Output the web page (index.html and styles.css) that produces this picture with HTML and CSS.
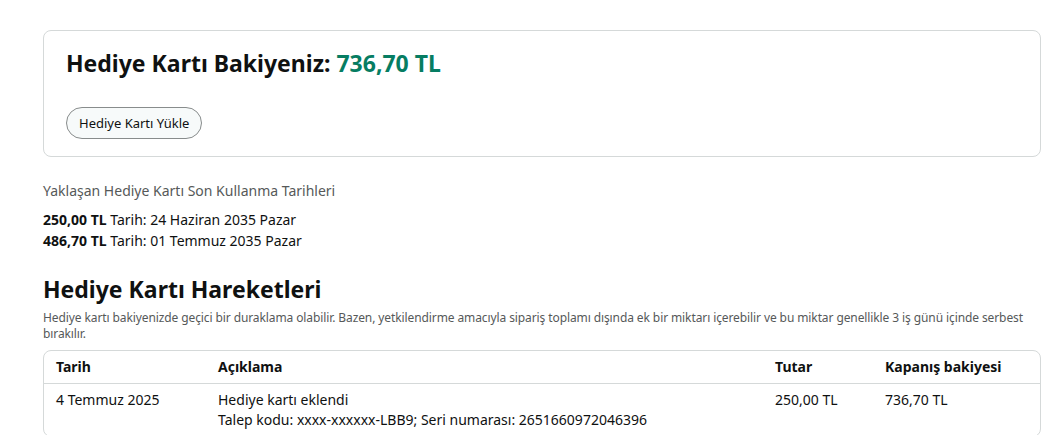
FILE: index.html
```html
<!DOCTYPE html>
<html lang="tr">

<head>
    <meta charset="UTF-8">
    <meta name="viewport" content="width=device-width, initial-scale=1.0">
    <title>Hediye Kartı</title>
    <link rel="stylesheet" href="styles.css">
</head>

<body>
    <div class="page">
        <div class="balance-box">
            <h1 class="balance-title">Hediye Kartı Bakiyeniz: <span class="amount">736,70 TL</span></h1>
            <button class="load-btn" type="button">Hediye Kartı Yükle</button>
        </div>

        <div class="expiry">
            <div class="expiry-title">Yaklaşan Hediye Kartı Son Kullanma Tarihleri</div>
            <div class="expiry-list">
                <div><b>250,00 TL</b> Tarih: 24 Haziran 2035 Pazar</div>
                <div><b>486,70 TL</b> Tarih: 01 Temmuz 2035 Pazar</div>
            </div>
        </div>

        <h2 class="section-title">Hediye Kartı Hareketleri</h2>
        <p class="note">Hediye kartı bakiyenizde geçici bir duraklama olabilir. Bazen, yetkilendirme amacıyla sipariş toplamı dışında ek bir miktarı içerebilir ve bu miktar genellikle 3 iş günü içinde serbest bırakılır.</p>

        <div class="tx-table">
            <div class="tx-row tx-head">
                <div>Tarih</div>
                <div>Açıklama</div>
                <div>Tutar</div>
                <div>Kapanış bakiyesi</div>
            </div>
            <div class="tx-row">
                <div>4 Temmuz 2025</div>
                <div>Hediye kartı eklendi<br>Talep kodu: xxxx-xxxxxx-LBB9; Seri numarası: 2651660972046396</div>
                <div>250,00 TL</div>
                <div>736,70 TL</div>
            </div>
        </div>
    </div>
</body>

</html>
```

FILE: styles.css
```css
body {
    margin: 0;
    background: #fff;
    color: #0f1111;
    font-family: "Noto Sans", "DejaVu Sans", sans-serif;
    font-size: 14px;
    line-height: 20px;
}

.page {
    width: 998px;
    margin-left: 43px;
    padding-top: 30px;
}

.balance-box {
    border: 1px solid #d5d9d9;
    border-radius: 8px;
    padding: 16px 22px 17px;
}

.balance-title {
    margin: 0 0 28px;
    font-size: 23px;
    line-height: 32px;
    font-weight: 700;
}

.amount {
    color: #067d62;
}

.load-btn {
    height: 32px;
    padding: 0 12px;
    border: 1px solid #888c8c;
    border-radius: 16px;
    background: #f7fafa;
    color: #0f1111;
    font-family: inherit;
    font-size: 13px;
    cursor: pointer;
}

.expiry {
    margin-top: 24px;
}

.expiry-title {
    color: #565959;
}

.expiry-list {
    margin-top: 8px;
    line-height: 21px;
}

.section-title {
    margin: 22px 0 5px;
    font-size: 23px;
    line-height: 32px;
    font-weight: 700;
}

.note {
    margin: 0 0 8px;
    font-size: 12px;
    line-height: 16px;
    letter-spacing: -0.1px;
    color: #565959;
}

.tx-table {
    border: 1px solid #d5d9d9;
    border-radius: 8px;
}

.tx-row {
    display: grid;
    grid-template-columns: 162px 557px 110px 1fr;
    padding: 6px 12px;
}

.tx-head {
    font-weight: 700;
    border-bottom: 1px solid #d5d9d9;
}
```
